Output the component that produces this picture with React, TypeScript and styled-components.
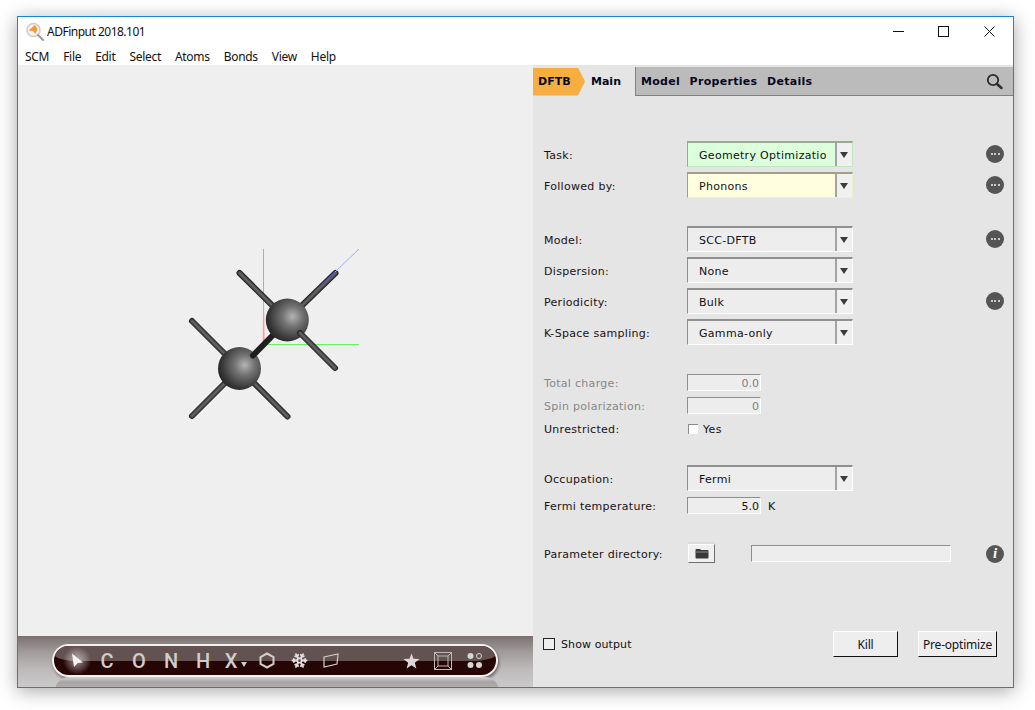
import * as React from 'react';
import styled, { createGlobalStyle } from 'styled-components';
import { Snowflake } from 'lucide-react';

const GlobalStyle = createGlobalStyle`
  html, body {
    margin: 0;
    padding: 0;
    background: #fff;
    color: #111;
    font-family: 'DejaVu Sans', Verdana, sans-serif;
    font-size: 11px;
  }
`;

const Page = styled.div`
  width: 1035px;
  height: 710px;
  padding: 16px 0 0 17px;
  box-sizing: border-box;
  overflow: hidden;
`;

const Window = styled.div`
  width: 997px;
  height: 672px;
  box-sizing: border-box;
  border: 1px solid #1883d7;
  background: #fff;
  box-shadow: 0 3px 18px rgba(0, 0, 0, 0.35);
  display: flex;
  flex-direction: column;
`;

const TitleBar = styled.div`
  height: 29px;
  flex: none;
  display: flex;
  align-items: center;
  padding-left: 7px;
`;

const AppTitle = styled.span`
  font-family: 'Noto Sans', sans-serif;
  font-size: 12px;
  letter-spacing: -0.5px;
  margin-left: 2px;
  color: #111;
`;

const WindowControls = styled.div`
  margin-left: auto;
  padding-right: 1px;
  display: flex;
`;

const WindowButton = styled.div`
  width: 45.5px;
  height: 29px;
  display: flex;
  align-items: center;
  justify-content: center;
`;

const MenuBar = styled.div`
  height: 19px;
  flex: none;
  display: flex;
  gap: 14px;
  padding: 2px 0 0 7px;
  box-sizing: border-box;
  font-family: 'Noto Sans', sans-serif;
  font-size: 12px;
  letter-spacing: -0.3px;
  line-height: 17px;
  color: #111;
`;

const Body = styled.div`
  flex: 1;
  display: flex;
  min-height: 0;
`;

const LeftPanel = styled.div`
  width: 515px;
  flex: none;
  display: flex;
  flex-direction: column;
`;

const Viewer = styled.div`
  flex: 1;
  background: #efefef;
  padding: 180px 0 0 167px;
  box-sizing: border-box;
`;

const ToolDock = styled.div`
  position: relative;
  height: 51px;
  flex: none;
  padding: 8px 0 0 34px;
  box-sizing: border-box;
  background: linear-gradient(180deg, #7b7070 0%, #a09a9a 30%, #bdbaba 65%, #cbcaca 100%);
  overflow: hidden;

  &::after {
    content: '';
    position: absolute;
    left: 37px;
    width: 444px;
    top: 41px;
    height: 14px;
    border-radius: 14px 14px 0 0;
    background: linear-gradient(180deg, #d4d4d4 0%, #a9a4a4 35%, #b4b2b2 100%);
  }
`;

const ToolPill = styled.div`
  position: relative;
  width: 446px;
  height: 33px;
  box-sizing: border-box;
  border: 2px solid #f2f0f0;
  border-radius: 17px;
  background: #260505;
  box-shadow: 1px 2px 3px rgba(40, 30, 30, 0.55);
  display: flex;
  align-items: center;
  padding: 0 5px 0 9px;
  overflow: hidden;

  &::before {
    content: '';
    position: absolute;
    left: 0;
    right: 0;
    top: 0;
    height: 15px;
    background: #635252;
    border-radius: 0 0 24px 24px / 0 0 7px 7px;
  }
`;

const ArrowSlot = styled.div`
  position: relative;
  width: 28px;
  height: 100%;
  display: flex;
  align-items: center;
  justify-content: center;

  &::before {
    content: '';
    position: absolute;
    left: 0;
    top: 0;
    width: 28px;
    height: 29px;
    border-radius: 50%;
    background: radial-gradient(circle, rgba(255, 255, 255, 0.55) 0%, rgba(255, 255, 255, 0.25) 40%, rgba(255, 255, 255, 0) 70%);
  }

  svg {
    position: relative;
  }
`;

const ToolSlot = styled.div<{ $shift?: number }>`
  position: relative;
  width: 32px;
  flex: none;
  box-sizing: border-box;
  padding-right: ${p => p.$shift || 0}px;
  display: flex;
  align-items: center;
  justify-content: center;
  font-family: 'Roboto', sans-serif;
  font-weight: 500;
  font-size: 20px;
  color: #d2cdcd;
  line-height: 1;
`;

const ToolGap = styled.div`
  flex: 1;
`;

const DropMark = styled.span`
  position: absolute;
  left: 22px;
  top: 11px;
  width: 0;
  height: 0;
  border-left: 3px solid transparent;
  border-right: 3px solid transparent;
  border-top: 5px solid #d2cdcd;
`;

const RightPanel = styled.div`
  flex: 1;
  min-width: 0;
  display: flex;
  flex-direction: column;
  background: #e5e5e5;
`;

const TabBar = styled.div`
  height: 29px;
  flex: none;
  margin-top: 2px;
  display: flex;
  align-items: center;
  background: #bbbbbb;
  border-bottom: 1px solid #7f7f7f;
  box-sizing: border-box;
  font-weight: bold;
  font-size: 11px;
  color: #07071e;
`;

const Crumbs = styled.div`
  width: 103px;
  height: 29px;
  flex: none;
  display: flex;
  align-items: center;
  background: #e5e5e5;
  border-right: 1px solid #7f7f7f;
  box-sizing: border-box;
  align-self: flex-start;
`;

const EngineTab = styled.div`
  width: 52px;
  height: 28px;
  padding-left: 5px;
  box-sizing: border-box;
  display: flex;
  align-items: center;
  background: #f6ae41;
  clip-path: polygon(0 0, 45px 0, 52px 50%, 45px 100%, 0 100%);
`;

const MainTab = styled.div`
  padding-left: 6px;
`;

const Tab = styled.div`
  margin-left: 5px;
  margin-right: 4.5px;
  letter-spacing: 0.3px;
`;

const SearchButton = styled.div`
  margin-left: auto;
  padding-right: 10px;
  display: flex;
`;

const Form = styled.div`
  flex: 1;
  display: flex;
  flex-direction: column;
  padding: 45px 9px 0 11px;
  min-height: 0;
`;

const Group = styled.div<{ $gap: number; $top: number }>`
  display: flex;
  flex-direction: column;
  gap: ${p => p.$gap}px;
  margin-top: ${p => p.$top}px;
`;

const Row = styled.div`
  display: flex;
  align-items: center;
`;

const CheckLine = styled(Row)`
  height: 18px;
`;

const Label = styled.div<{ $disabled?: boolean; $flush?: boolean }>`
  width: 143px;
  flex: none;
  padding-top: ${p => (p.$flush ? 0 : 2)}px;
  letter-spacing: 0.3px;
  color: ${p => (p.$disabled ? '#878787' : '#1a1212')};
`;

const Combo = styled.div<{ $tint: string; $edge: string; $outer: string }>`
  width: 166px;
  height: 26px;
  box-sizing: border-box;
  display: flex;
  background: ${p => p.$tint};
  border-top: 2px solid ${p => p.$edge};
  border-left: 1px solid ${p => p.$edge};
  border-right: 1px solid ${p => p.$outer};
  border-bottom: 1px solid ${p => p.$outer};
`;

const ComboText = styled.div`
  width: 127px;
  margin: 0 9px 0 11px;
  overflow: hidden;
  white-space: nowrap;
  line-height: 25px;
  letter-spacing: 0.3px;
  color: #111;
`;

const ComboArrow = styled.div`
  flex: 1;
  display: flex;
  align-items: center;
  justify-content: center;
  background: #f0f0f0;
  border-left: 2px solid #a3a3a3;
  padding-right: 2px;

  &::after {
    content: '';
    width: 0;
    height: 0;
    border-left: 4px solid transparent;
    border-right: 4px solid transparent;
    border-top: 6px solid #3c3c3c;
  }
`;

const FieldBox = styled.div<{ $width: number; $disabled?: boolean }>`
  width: ${p => p.$width}px;
  height: 17px;
  box-sizing: border-box;
  background: #ededed;
  border-top: 1px solid #8f8f8f;
  border-left: 1px solid #8f8f8f;
  border-right: 1px solid #fff;
  border-bottom: 1px solid #fff;
  text-align: right;
  padding-right: 1px;
  line-height: 17px;
  color: ${p => (p.$disabled ? '#808080' : '#111')};
`;

const Unit = styled.span`
  margin-left: 7px;
  padding-top: 2px;
`;

const CheckRow = styled.div`
  display: flex;
  align-items: center;
  gap: 5px;
  margin-left: 1px;
  letter-spacing: 0.3px;
`;

const FlatCheck = styled.span`
  width: 10px;
  height: 10px;
  box-sizing: border-box;
  background: #fff;
  border-top: 1px solid #8c8c8c;
  border-left: 1px solid #8c8c8c;
`;

const RoundButton = styled.div`
  width: 18px;
  height: 18px;
  margin-left: auto;
  border-radius: 50%;
  background: #555555;
  color: #fff;
  display: flex;
  align-items: center;
  justify-content: center;
  gap: 1.5px;
  font-family: 'Liberation Serif', serif;
  font-style: italic;
  font-weight: bold;
  font-size: 15px;
`;

const Dot = styled.span`
  width: 2px;
  height: 2px;
  border-radius: 50%;
  background: #f2f2f2;
`;

const FolderButton = styled.div`
  width: 27px;
  height: 19px;
  margin-left: 1px;
  box-sizing: border-box;
  display: flex;
  align-items: center;
  justify-content: center;
  background: #f0f0f0;
  border-top: 1px solid #fff;
  border-left: 1px solid #fff;
  border-right: 1px solid #707070;
  border-bottom: 1px solid #707070;
  box-shadow: 0 -2px 0 #dcdcdc;
`;

const PathBox = styled.div`
  width: 200px;
  height: 17px;
  margin-left: 36px;
  box-sizing: border-box;
  background: #ededed;
  border-top: 1px solid #8f8f8f;
  border-left: 1px solid #8f8f8f;
  border-right: 1px solid #fff;
  border-bottom: 1px solid #fff;
`;

const Footer = styled.div`
  margin-top: auto;
  padding: 0 7px 30px 0;
  display: flex;
  align-items: center;
  justify-content: flex-end;
  gap: 20px;
`;

const ShowOutput = styled.label`
  display: flex;
  align-items: center;
  gap: 6px;
  margin-right: auto;
  margin-left: -1px;
  letter-spacing: 0.1px;
`;

const OutputCheck = styled.span`
  width: 12px;
  height: 12px;
  box-sizing: border-box;
  background: #efefef;
  border: 1px solid #222;
`;

const PushButton = styled.div<{ $width: number }>`
  width: ${p => p.$width}px;
  height: 26px;
  box-sizing: border-box;
  display: flex;
  align-items: center;
  justify-content: center;
  background: #eeeeee;
  border-top: 1px solid #fff;
  border-left: 1px solid #fff;
  border-right: 1px solid #111;
  border-bottom: 1px solid #111;
  font-family: 'Noto Sans', sans-serif;
  font-size: 12px;
  letter-spacing: -0.2px;
  color: #14101e;
`;

const menuItems = ['SCM', 'File', 'Edit', 'Select', 'Atoms', 'Bonds', 'View', 'Help'];
const elements = ['C', 'O', 'N', 'H'];

const AppIcon = () => (
  <svg width="20" height="20" viewBox="0 0 20 20">
    <circle cx="8.5" cy="8" r="6.5" fill="#f6f3f0" stroke="#d2cec9" strokeWidth="1.6" />
    <path d="M3.5 8.5 L10 3 L12.5 7 L10.5 12 L8 9 Z" fill="#f49a32" />
    <path d="M13 13 L18 18" stroke="#9a9a9a" strokeWidth="2" strokeLinecap="round" />
  </svg>
);

const MinimizeIcon = () => (
  <svg width="11" height="11" viewBox="0 0 11 11">
    <path d="M0 5.5 H11" stroke="#111" strokeWidth="1" />
  </svg>
);

const MaximizeIcon = () => (
  <svg width="11" height="11" viewBox="0 0 11 11">
    <rect x="0.5" y="0.5" width="10" height="10" fill="none" stroke="#111" strokeWidth="1" />
  </svg>
);

const CloseIcon = () => (
  <svg width="11" height="11" viewBox="0 0 11 11">
    <path d="M0.5 0.5 L10.5 10.5 M10.5 0.5 L0.5 10.5" stroke="#111" strokeWidth="1" />
  </svg>
);

const SearchIcon = () => (
  <svg width="17" height="17" viewBox="0 0 17 17">
    <circle cx="7" cy="7" r="5.2" fill="none" stroke="#2a2a2a" strokeWidth="1.8" />
    <path d="M11 11 L15.5 15" stroke="#2a2a2a" strokeWidth="2.4" strokeLinecap="round" />
  </svg>
);

const FolderIcon = () => (
  <svg width="14" height="11" viewBox="0 0 14 11">
    <path d="M0.5 2 Q0.5 1 1.5 1 H5 L6 2 H12.5 Q13.5 2 13.5 3 V9.5 Q13.5 10.5 12.5 10.5 H1.5 Q0.5 10.5 0.5 9.5 Z" fill="#3a3a3a" />
    <path d="M1 4 H13" stroke="#8a8a8a" strokeWidth="1" />
  </svg>
);

const backBonds = [
  [287, 320, 239.5, 273],
  [287, 320, 335.5, 273],
  [239.5, 368.5, 192, 321],
  [239.5, 368.5, 192, 416],
  [239.5, 368.5, 287.5, 416.5],
];

const Bond = ({ from }: { from: number[] }) => (
  <g strokeLinecap="round">
    <line x1={from[0]} y1={from[1]} x2={from[2]} y2={from[3]} stroke="#242424" strokeWidth="6" />
    <line x1={from[0]} y1={from[1]} x2={from[2]} y2={from[3]} stroke="#4a4a4a" strokeWidth="4" />
    <line x1={from[0]} y1={from[1]} x2={from[2]} y2={from[3]} stroke="#666" strokeWidth="1.5" />
  </g>
);

const Molecule = () => (
  <svg width="180" height="180" viewBox="185 245 180 180">
    <defs>
      <radialGradient id="atom" cx="0.62" cy="0.42" r="0.66">
        <stop offset="0" stopColor="#b4b4b4" />
        <stop offset="0.35" stopColor="#747474" />
        <stop offset="0.8" stopColor="#383838" />
        <stop offset="1" stopColor="#222" />
      </radialGradient>
    </defs>
    <line x1="263.5" y1="345" x2="263.5" y2="249" stroke="#ff8c8c" strokeWidth="1" />
    <path d="M262.5 345 L263.5 280 L265 345 Z" fill="#ff9c9c" opacity="0.7" />
    <line x1="263" y1="344.5" x2="359" y2="344.5" stroke="#6af06a" strokeWidth="1" />
    {backBonds.map(b => (
      <Bond key={b.join('-')} from={b} />
    ))}
    <line x1="315" y1="291" x2="335" y2="272" stroke="#4c5cf0" strokeWidth="1" opacity="0.85" />
    <line x1="335" y1="272" x2="359" y2="249" stroke="#a0a8f8" strokeWidth="1" />
    <circle cx="239.5" cy="368.5" r="21.5" fill="url(#atom)" />
    <line x1="253" y1="355.5" x2="276" y2="332" stroke="#1f1f1f" strokeWidth="6" strokeLinecap="round" />
    <circle cx="287.3" cy="320" r="21.5" fill="url(#atom)" />
    <Bond from={[300, 333, 335, 368]} />
  </svg>
);

const PointerIcon = () => (
  <svg width="13" height="15" viewBox="0 0 13 15">
    <path d="M1 0.5 L12 9.5 L6.8 10 L3 14 Z" fill="#f6f3f3" />
  </svg>
);

const HexIcon = () => (
  <svg width="16" height="17" viewBox="0 0 16 17">
    <path d="M8 1.5 L14.5 5 V12 L8 15.5 L1.5 12 V5 Z" fill="none" stroke="#d2cdcd" strokeWidth="2" />
  </svg>
);

const PlaneIcon = () => (
  <svg width="16" height="15" viewBox="0 0 16 15">
    <path d="M1 4 L15 1 L14 11 L1 14 Z" fill="none" stroke="#d2cdcd" strokeWidth="1.2" />
  </svg>
);

const StarIcon = () => (
  <svg width="17" height="16" viewBox="0 0 17 16">
    <path d="M8.5 0.5 L10.5 5.8 L16.5 6.1 L11.8 9.7 L13.4 15.5 L8.5 12.2 L3.6 15.5 L5.2 9.7 L0.5 6.1 L6.5 5.8 Z" fill="#dcd8d8" />
  </svg>
);

const BoxIcon = () => (
  <svg width="18" height="18" viewBox="0 0 18 18">
    <g fill="none" stroke="#bdb8b8" strokeWidth="1">
      <rect x="0.5" y="0.5" width="17" height="17" />
      <rect x="4" y="4" width="10" height="10" />
      <path d="M0.5 0.5 L4 4 M17.5 0.5 L14 4 M0.5 17.5 L4 14 M17.5 17.5 L14 14" />
    </g>
  </svg>
);

const ClusterIcon = () => (
  <svg width="16" height="17" viewBox="0 0 16 17">
    <circle cx="3.5" cy="4" r="3" fill="#d8d4d4" />
    <circle cx="12" cy="4" r="2.5" fill="none" stroke="#d8d4d4" strokeWidth="1" />
    <circle cx="3.5" cy="13" r="3" fill="#d8d4d4" />
    <circle cx="12" cy="13" r="3" fill="#d8d4d4" />
  </svg>
);

const MoreButton = () => (
  <RoundButton>
    <Dot />
    <Dot />
    <Dot />
  </RoundButton>
);

type SelectProps = { value: string; tint?: string; edge?: string; outer?: string };

const Select = ({ value, tint = '#ededed', edge = '#8f8f8f', outer = '#fff' }: SelectProps) => (
  <Combo $tint={tint} $edge={edge} $outer={outer}>
    <ComboText>{value}</ComboText>
    <ComboArrow />
  </Combo>
);

export default function App() {
  return (
    <Page>
      <GlobalStyle />
      <Window>
        <TitleBar>
          <AppIcon />
          <AppTitle>ADFinput 2018.101</AppTitle>
          <WindowControls>
            <WindowButton>
              <MinimizeIcon />
            </WindowButton>
            <WindowButton>
              <MaximizeIcon />
            </WindowButton>
            <WindowButton>
              <CloseIcon />
            </WindowButton>
          </WindowControls>
        </TitleBar>
        <MenuBar>
          {menuItems.map(item => (
            <span key={item}>{item}</span>
          ))}
        </MenuBar>
        <Body>
          <LeftPanel>
            <Viewer>
              <Molecule />
            </Viewer>
            <ToolDock>
              <ToolPill>
                <ArrowSlot>
                  <PointerIcon />
                </ArrowSlot>
                {elements.map(el => (
                  <ToolSlot key={el}>{el}</ToolSlot>
                ))}
                <ToolSlot $shift={8}>
                  X<DropMark />
                </ToolSlot>
                <ToolSlot>
                  <HexIcon />
                </ToolSlot>
                <ToolSlot>
                  <Snowflake size={17} strokeWidth={2.6} color="#e2dede" />
                </ToolSlot>
                <ToolSlot>
                  <PlaneIcon />
                </ToolSlot>
                <ToolGap />
                <ToolSlot>
                  <StarIcon />
                </ToolSlot>
                <ToolSlot>
                  <BoxIcon />
                </ToolSlot>
                <ToolSlot>
                  <ClusterIcon />
                </ToolSlot>
              </ToolPill>
            </ToolDock>
          </LeftPanel>
          <RightPanel>
            <TabBar>
              <Crumbs>
                <EngineTab>DFTB</EngineTab>
                <MainTab>Main</MainTab>
              </Crumbs>
              <Tab>Model</Tab>
              <Tab>Properties</Tab>
              <Tab>Details</Tab>
              <SearchButton>
                <SearchIcon />
              </SearchButton>
            </TabBar>
            <Form>
              <Group $gap={5} $top={0}>
                <Row>
                  <Label>Task:</Label>
                  <Select value="Geometry Optimization" tint="#dcffdc" edge="#99aa90" outer="#bfe6bf" />
                  <MoreButton />
                </Row>
                <Row>
                  <Label>Followed by:</Label>
                  <Select value="Phonons" tint="#ffffe0" edge="#a0a088" outer="#f0f0c8" />
                  <MoreButton />
                </Row>
              </Group>
              <Group $gap={5} $top={28}>
                <Row>
                  <Label>Model:</Label>
                  <Select value="SCC-DFTB" />
                  <MoreButton />
                </Row>
                <Row>
                  <Label>Dispersion:</Label>
                  <Select value="None" />
                </Row>
                <Row>
                  <Label>Periodicity:</Label>
                  <Select value="Bulk" />
                  <MoreButton />
                </Row>
                <Row>
                  <Label>K-Space sampling:</Label>
                  <Select value="Gamma-only" />
                </Row>
              </Group>
              <Group $gap={6} $top={29}>
                <Row>
                  <Label $disabled>Total charge:</Label>
                  <FieldBox $width={74} $disabled>0.0</FieldBox>
                </Row>
                <Row>
                  <Label $disabled>Spin polarization:</Label>
                  <FieldBox $width={74} $disabled>0</FieldBox>
                </Row>
                <CheckLine>
                  <Label $flush>Unrestricted:</Label>
                  <CheckRow>
                    <FlatCheck />
                    Yes
                  </CheckRow>
                </CheckLine>
              </Group>
              <Group $gap={6} $top={27}>
                <Row>
                  <Label>Occupation:</Label>
                  <Select value="Fermi" />
                </Row>
                <Row>
                  <Label>Fermi temperature:</Label>
                  <FieldBox $width={74}>5.0</FieldBox>
                  <Unit>K</Unit>
                </Row>
              </Group>
              <Group $gap={0} $top={30}>
                <Row>
                  <Label>Parameter directory:</Label>
                  <FolderButton>
                    <FolderIcon />
                  </FolderButton>
                  <PathBox />
                  <RoundButton>i</RoundButton>
                </Row>
              </Group>
              <Footer>
                <ShowOutput>
                  <OutputCheck />
                  Show output
                </ShowOutput>
                <PushButton $width={65}>Kill</PushButton>
                <PushButton $width={79}>Pre-optimize</PushButton>
              </Footer>
            </Form>
          </RightPanel>
        </Body>
      </Window>
    </Page>
  );
}
